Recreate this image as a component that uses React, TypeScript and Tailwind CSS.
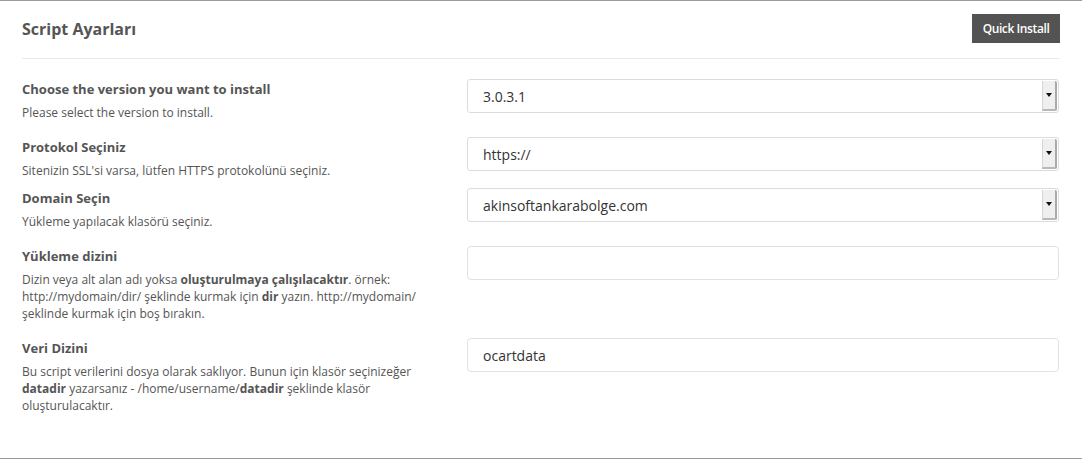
const font = { fontFamily: '"Open Sans", "Liberation Sans", sans-serif' };

function SelectBox({ value }: { value: string }) {
  return (
    <div className="flex h-[34px] w-[592px] items-stretch rounded-[3px] border border-[#dcdcdc] bg-white">
      <div className="flex flex-1 items-center pl-[15px] text-[14px] text-[#333]">{value}</div>
      <div className="my-[1px] mr-[1px] flex w-[15px] items-center justify-center rounded-r-[2px] border-l border-[#d6d6d6] border-r-2 border-b-2 border-r-[#a9a9a9] border-b-[#b8b8b8] bg-[#efefef]">
        <svg width="6" height="4" viewBox="0 0 6 4">
          <path d="M0 0h6L3 4z" fill="#111" />
        </svg>
      </div>
    </div>
  );
}

function TextBox({ value }: { value?: string }) {
  return (
    <div className="flex h-[34px] w-[592px] items-center rounded-[4px] border border-[#e2e2e2] bg-white pl-[15px] text-[14px] text-[#333]">
      {value}
    </div>
  );
}

function Row({
  label,
  children,
  control,
  className,
}: {
  label: string;
  children: React.ReactNode;
  control: React.ReactNode;
  className?: string;
}) {
  return (
    <div className={`flex items-start ${className ?? ""}`}>
      <div className="w-[445px]">
        <div className="text-[13px] font-bold leading-[20px] text-[#555]">{label}</div>
        <div className="mt-[5px] w-[420px] text-[12px] leading-[17px] text-[#555]">{children}</div>
      </div>
      {control}
    </div>
  );
}

export default function App() {
  return (
    <div style={font} className="h-[460px] w-[1082px] bg-white">
      <div className="h-[459px] border-t border-b border-[#9a9a9a] px-[22px]">
        <div className="flex h-[58px] items-start justify-between border-b border-[#ebebeb] pt-[13px]">
          <h2 className="mt-[1px] text-[16px] font-bold leading-[28px] text-[#555]">Script Ayarları</h2>
          <button className="h-[29px] w-[88px] bg-[#535353] text-[12px] font-semibold tracking-[-0.4px] text-white">
            Quick Install
          </button>
        </div>

        <div className="pt-[20px]">
          <Row
            label="Choose the version you want to install"
            control={<SelectBox value="3.0.3.1" />}
            className="mb-[16px]"
          >
            Please select the version to install.
          </Row>
          <Row
            label="Protokol Seçiniz"
            control={<SelectBox value="https://" />}
            className="mb-[9px]"
          >
            Sitenizin SSL'si varsa, lütfen HTTPS protokolünü seçiniz.
          </Row>
          <Row
            label="Domain Seçin"
            control={<SelectBox value="akinsoftankarabolge.com" />}
            className="mb-[16px]"
          >
            Yükleme yapılacak klasörü seçiniz.
          </Row>
          <Row label="Yükleme dizini" control={<TextBox />} className="mb-[16px]">
            Dizin veya alt alan adı yoksa <b className="font-bold">oluşturulmaya çalışılacaktır</b>. örnek:
            http://mydomain/dir/ şeklinde kurmak için <b className="font-bold">dir</b> yazın. http://mydomain/
            şeklinde kurmak için boş bırakın.
          </Row>
          <Row label="Veri Dizini" control={<TextBox value="ocartdata" />}>
            Bu script verilerini dosya olarak saklıyor. Bunun için klasör seçinizeğer{" "}
            <b className="font-bold">datadir</b> yazarsanız - /home/username/<b className="font-bold">datadir</b>{" "}
            şeklinde klasör oluşturulacaktır.
          </Row>
        </div>
      </div>
    </div>
  );
}
